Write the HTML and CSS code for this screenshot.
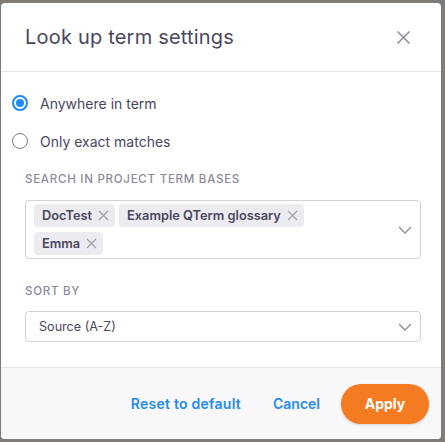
FILE: index.html
```html
<!DOCTYPE html>
<html>
<head>
<meta charset="utf-8">
<link rel="stylesheet" href="styles.css">
</head>
<body>
<div class="dialog">
  <div class="header">
    <h1 class="title">Look up term settings</h1>
    <svg class="close" width="15" height="15" viewBox="0 0 15 15"><path d="M1.5 1.5L13.5 13.5M13.5 1.5L1.5 13.5" stroke="#8c8a9c" stroke-width="1.5" fill="none"/></svg>
  </div>
  <div class="content">
    <div class="radio-row">
      <span class="radio checked"></span>
      <span class="radio-label">Anywhere in term</span>
    </div>
    <div class="radio-row">
      <span class="radio"></span>
      <span class="radio-label">Only exact matches</span>
    </div>
    <div class="field-label first">Search in project term bases</div>
    <div class="multi">
      <div class="tags">
        <span class="tag">DocTest<svg class="tag-x" width="11" height="11" viewBox="0 0 11 11"><path d="M1 1L10 10M10 1L1 10" stroke="#a3a1b0" stroke-width="1.3" fill="none"/></svg></span>
        <span class="tag">Example QTerm glossary<svg class="tag-x" width="11" height="11" viewBox="0 0 11 11"><path d="M1 1L10 10M10 1L1 10" stroke="#a3a1b0" stroke-width="1.3" fill="none"/></svg></span>
        <span class="tag">Emma<svg class="tag-x" width="11" height="11" viewBox="0 0 11 11"><path d="M1 1L10 10M10 1L1 10" stroke="#a3a1b0" stroke-width="1.3" fill="none"/></svg></span>
      </div>
      <svg class="chev" width="14" height="8" viewBox="0 0 14 8"><path d="M1 1L7 7L13 1" stroke="#8c8a9c" stroke-width="1.3" fill="none"/></svg>
    </div>
    <div class="field-label second">Sort by</div>
    <div class="select">
      <span class="select-text">Source (A-Z)</span>
      <svg class="chev" width="14" height="8" viewBox="0 0 14 8"><path d="M1 1L7 7L13 1" stroke="#8c8a9c" stroke-width="1.3" fill="none"/></svg>
    </div>
  </div>
  <div class="footer">
    <button class="link-btn reset">Reset to default</button>
    <button class="link-btn cancel">Cancel</button>
    <button class="apply">Apply</button>
  </div>
</div>
</body>
</html>
```
FILE: styles.css
```css
html, body {
  margin: 0;
  padding: 0;
}
body {
  background: #7f7b79;
  font-family: Inter, "Noto Sans", sans-serif;
  width: 445px;
  height: 442px;
  overflow: hidden;
}
.dialog {
  margin: 3px 4px 0 1px;
  width: 440px;
  height: 436px;
  background: #ffffff;
  border-radius: 4px;
  display: flex;
  flex-direction: column;
  overflow: hidden;
}
.header {
  height: 68px;
  border-bottom: 1px solid #e3e3e8;
  display: flex;
  align-items: center;
  justify-content: space-between;
  padding: 0 30px 0 24px;
  flex-shrink: 0;
}
.title {
  margin: 0;
  font-size: 20px;
  font-weight: 400;
  color: #4a475e;
  letter-spacing: 0.2px;
}
.close {
  display: block;
}
.content {
  padding: 19px 20px 25px 24px;
  flex: 1;
}
.radio-row {
  display: flex;
  align-items: center;
  height: 24px;
  margin-left: -13px;
}
.radio-row + .radio-row {
  margin-top: 14px;
}
.radio {
  width: 16px;
  height: 16px;
  border-radius: 50%;
  box-sizing: border-box;
  border: 1.5px solid #7d7a8e;
  background: #fff;
  position: relative;
  flex-shrink: 0;
}
.radio.checked {
  border: 2px solid #1f8bf5;
}
.radio.checked::after {
  content: "";
  position: absolute;
  left: 2px;
  top: 2px;
  width: 8px;
  height: 8px;
  border-radius: 50%;
  background: #1f8bf5;
}
.radio-label {
  margin-left: 12px;
  font-size: 14px;
  color: #4a475e;
}
.field-label {
  font-size: 11.5px;
  line-height: 16px;
  text-transform: uppercase;
  color: #8b899b;
  font-weight: 500;
  letter-spacing: 0.75px;
}
.field-label.first {
  margin-top: 18px;
}
.field-label.second {
  margin-top: 24px;
}
.multi {
  margin-top: 13px;
  border: 1px solid #d3d1da;
  border-radius: 4px;
  padding: 3px 8px 3px 8px;
  display: flex;
  align-items: center;
  justify-content: space-between;
}
.tags {
  display: flex;
  flex-wrap: wrap;
  gap: 5px 4px;
  width: 300px;
}
.tag {
  display: inline-flex;
  align-items: center;
  height: 23px;
  background: #ececf0;
  border-radius: 4px;
  padding: 0 6px 0 8px;
  font-size: 12.8px;
  font-weight: 600;
  color: #4a475e;
}
.tag-x {
  margin-left: 6px;
  display: block;
}
.chev {
  display: block;
  flex-shrink: 0;
}
.select {
  margin-top: 12px;
  height: 31px;
  box-sizing: border-box;
  border: 1px solid #d3d1da;
  border-radius: 4px;
  display: flex;
  align-items: center;
  justify-content: space-between;
  padding: 0 8px 0 13px;
}
.select-text {
  font-size: 12.6px;
  color: #4a475e;
}
.footer {
  height: 71px;
  border-top: 1px solid #e3e3e8;
  background: #f8f8fa;
  display: flex;
  align-items: center;
  justify-content: flex-end;
  padding-right: 12px;
  flex-shrink: 0;
}
.link-btn {
  background: none;
  border: none;
  padding: 0;
  font-family: inherit;
  font-size: 14px;
  font-weight: 600;
  color: #1f8bf5;
}
.reset {
  margin-right: 32px;
  letter-spacing: 0.25px;
}
.cancel {
  margin-right: 21px;
}
.apply {
  width: 88px;
  height: 40px;
  border: none;
  border-radius: 20px;
  background: #f47b22;
  color: #fff;
  font-family: inherit;
  font-size: 14px;
  font-weight: 700;
  box-shadow: 0 1px 3px rgba(0,0,0,0.15);
}
```
